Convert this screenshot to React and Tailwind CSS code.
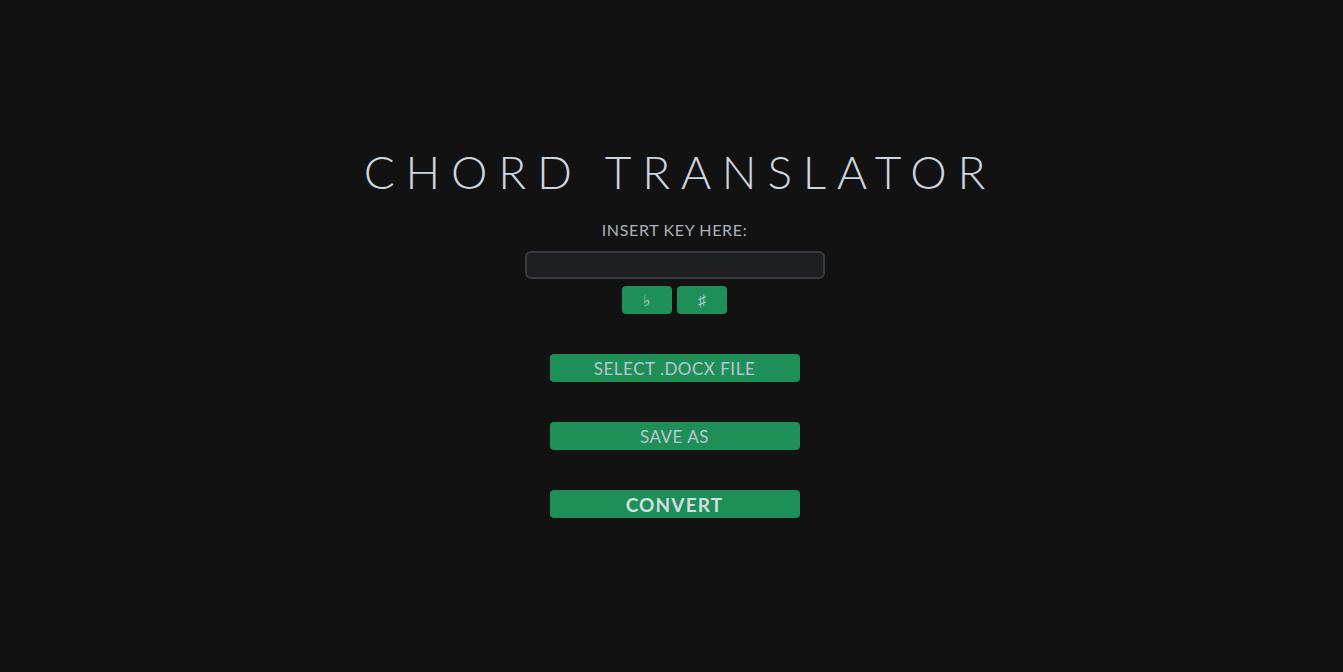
export default function App() {
  return (
    <div className="min-h-[672px] w-full bg-[#121212] flex flex-col items-center pt-[144px] pl-[6px] font-['Lato',sans-serif]">
      <h1 className="text-[46px] font-light tracking-[0.235em] text-[#cdd6de] leading-[56px] pl-[0.235em]">
        CHORD TRANSLATOR
      </h1>

      <p className="mt-[20px] text-[16px] tracking-[0.04em] leading-[20px] text-[#aab4bc]">INSERT KEY HERE:</p>

      <input
        type="text"
        className="mt-[11px] w-[300px] h-[28px] rounded-[6px] border-2 border-[#3a3c40] bg-[#1e1f22] text-[#cdd6de] px-2 outline-none"
      />

      <div className="mt-[7px] flex gap-[5px]">
        <button className="w-[50px] h-[28px] rounded-[4px] bg-[#1f8f58] text-[#b9c6cf] text-[16px]">♭</button>
        <button className="w-[50px] h-[28px] rounded-[4px] bg-[#1f8f58] text-[#b9c6cf] text-[16px]">♯</button>
      </div>

      <button className="mt-[40px] w-[250px] h-[28px] rounded-[4px] bg-[#1f8f58] text-[#b9c6cf] text-[17px] tracking-[0.03em] leading-none">
        SELECT .DOCX FILE
      </button>
      <button className="mt-[40px] w-[250px] h-[28px] rounded-[4px] bg-[#1f8f58] text-[#b9c6cf] text-[17px] tracking-[0.03em] leading-none">
        SAVE AS
      </button>
      <button className="mt-[40px] w-[250px] h-[28px] rounded-[4px] bg-[#1f8f58] text-[#d4dde4] text-[19px] font-bold tracking-[0.06em] leading-none">
        CONVERT
      </button>
    </div>
  );
}
